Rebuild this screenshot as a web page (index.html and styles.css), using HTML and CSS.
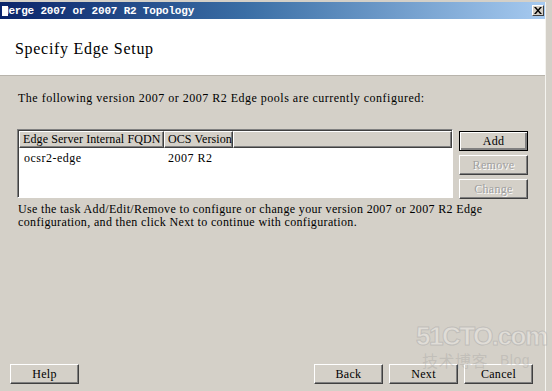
FILE: index.html
```html
<!DOCTYPE html>
<html>
<head>
<meta charset="utf-8">
<link rel="stylesheet" href="styles.css">
</head>
<body>
<div class="frame">
  <div class="window">
    <div class="titlebar">
      <span class="title"><span class="clip">M</span>erge 2007 or 2007 R2 Topology</span>
      <span class="close">
        <svg width="8" height="7" viewBox="0 0 8 7"><path d="M0 0h2l2 2.5L6 0h2L5 3.5 8 7H6L4 4.5 2 7H0l3-3.5z" fill="#000"/></svg>
      </span>
    </div>
    <div class="header">
      <h1 class="heading">Specify Edge Setup</h1>
    </div>
    <div class="content">
      <p class="intro">The following version 2007 or 2007 R2 Edge pools are currently configured:</p>
      <div class="listrow">
        <div class="list">
          <div class="list-head">
            <div class="col col-1">Edge Server Internal FQDN</div>
            <div class="col col-2">OCS Version</div>
            <div class="col col-3"></div>
          </div>
          <div class="list-item">
            <div class="cell cell-1">ocsr2-edge</div>
            <div class="cell cell-2">2007 R2</div>
          </div>
        </div>
        <div class="side-buttons">
          <button class="btn btn-default">Add</button>
          <button class="btn" disabled>Remove</button>
          <button class="btn" disabled>Change</button>
        </div>
      </div>
      <p class="hint">Use the task Add/Edit/Remove to configure or change your version 2007 or 2007 R2 Edge<br>configuration, and then click Next to continue with configuration.</p>
      <div class="spacer"></div>
      <div class="footer">
        <button class="btn btn-help">Help</button>
        <div class="nav">
          <button class="btn">Back</button>
          <button class="btn">Next</button>
          <button class="btn">Cancel</button>
        </div>
      </div>
      <div class="watermark">
        <div class="wm-big">51CTO.com</div>
        <div class="wm-small"><span>技术博客</span><span class="wm-blog">Blog</span></div>
      </div>
    </div>
  </div>
</div>
</body>
</html>
```

FILE: styles.css
```css
html, body {
  margin: 0;
  padding: 0;
}
body {
  width: 552px;
  height: 391px;
  overflow: hidden;
  background: #d4d0c8;
  font-family: "Liberation Serif", "Noto Sans CJK SC", serif;
  color: #000;
}
.frame {
  height: 391px;
  padding: 2px 6px 0 0;
  box-sizing: border-box;
  background: #d4d0c8;
}
.window {
  height: 100%;
  display: flex;
  flex-direction: column;
  border-right: 1px solid #f4f3ef;
  position: relative;
}
.titlebar {
  height: 17px;
  display: flex;
  align-items: center;
  justify-content: space-between;
  background: linear-gradient(to right, #0a246a 0%, #3a6ea5 45%, #a6caf0 100%);
  padding: 0 1px 0 2px;
}
.title {
  font-family: "Liberation Mono", monospace;
  font-weight: bold;
  font-size: 11px;
  letter-spacing: -0.2px;
  color: #fff;
  white-space: nowrap;
}
.clip {
  background: #fff;
  color: #fff;
  line-height: 10px;
  display: inline-block;
}
.close {
  width: 12px;
  height: 11px;
  box-sizing: border-box;
  background: #d4d0c8;
  border-top: 1px solid #fff;
  border-left: 1px solid #fff;
  border-right: 1px solid #404040;
  border-bottom: 1px solid #404040;
  display: flex;
  align-items: center;
  justify-content: center;
}
.header {
  height: 56px;
  background: #fff;
  border-bottom: 1px solid #b8b4ac;
  display: flex;
  align-items: center;
  padding-left: 15px;
}
.heading {
  margin: 4px 0 0;
  font-size: 16px;
  font-weight: normal;
  letter-spacing: 0.7px;
  font-family: "Liberation Serif", serif;
}
.content {
  flex: 1;
  display: flex;
  flex-direction: column;
  padding: 16px 12px 7px 10px;
  font-size: 12px;
  letter-spacing: 0.5px;
}
.intro {
  margin: 0 0 0 8px;
  line-height: 13px;
}
.listrow {
  display: flex;
  margin: 24px 0 0 7px;
  gap: 6px;
}
.list {
  width: 436px;
  height: 69px;
  box-sizing: border-box;
  background: #fff;
  border-top: 1px solid #808080;
  border-left: 1px solid #808080;
  border-right: 1px solid #fff;
  border-bottom: 1px solid #fff;
  box-shadow: inset 1px 1px 0 #404040;
}
.list-head {
  display: flex;
  height: 17px;
  margin: 1px 0 0 1px;
}
.col {
  box-sizing: border-box;
  background: #d4d0c8;
  border-top: 1px solid #fff;
  border-left: 1px solid #fff;
  border-right: 1px solid #404040;
  border-bottom: 1px solid #404040;
  box-shadow: inset -1px -1px 0 #808080;
  padding: 1px 0 0 3px;
  line-height: 13px;
  letter-spacing: 0.1px;
  white-space: nowrap;
}
.col-1 { width: 145px; }
.col-2 { width: 69px; }
.col-3 { flex: 1; }
.list-item {
  display: flex;
  padding-top: 4px;
  line-height: 13px;
}
.cell-1 {
  width: 145px;
  padding-left: 6px;
  box-sizing: border-box;
}
.cell-2 {
  padding-left: 5px;
}
.side-buttons {
  display: flex;
  flex-direction: column;
  gap: 4px;
  margin-top: 2px;
}
.btn {
  width: 69px;
  height: 20px;
  box-sizing: border-box;
  background: #d4d0c8;
  font-family: "Liberation Serif", serif;
  font-size: 12px;
  letter-spacing: 0.3px;
  color: #000;
  padding: 0;
  border-top: 1px solid #fff;
  border-left: 1px solid #fff;
  border-right: 1px solid #404040;
  border-bottom: 1px solid #404040;
  box-shadow: inset -1px -1px 0 #808080;
}
.btn-default {
  border: 1px solid #000;
  box-shadow: inset 1px 1px 0 #fff, inset -2px -2px 0 #808080;
}
.btn:disabled {
  color: #a0a0a0;
  text-shadow: 1px 1px 0 #fff;
}
.hint {
  margin: 4px 0 0 8px;
  line-height: 13px;
  letter-spacing: 0.35px;
}
.spacer {
  flex: 1;
}
.footer {
  display: flex;
  justify-content: space-between;
  align-items: center;
}
.nav {
  display: flex;
  gap: 6px;
}
.watermark {
  position: absolute;
  left: 416px;
  top: 321px;
  pointer-events: none;
  color: rgba(150, 150, 150, 0.3);
}
.wm-big {
  font-family: "Liberation Sans", sans-serif;
  font-weight: bold;
  font-size: 26px;
  line-height: 26px;
  letter-spacing: -1.5px;
  color: rgba(255, 255, 255, 0.3);
  -webkit-text-stroke: 1px rgba(160, 160, 160, 0.45);
}
.wm-small {
  display: flex;
  gap: 12px;
  font-family: "Noto Sans CJK SC", sans-serif;
  font-size: 16px;
  line-height: 18px;
  padding: 2px 0 0 6px;
}
.wm-blog {
  font-family: "Liberation Sans", sans-serif;
  font-size: 14px;
}
```
